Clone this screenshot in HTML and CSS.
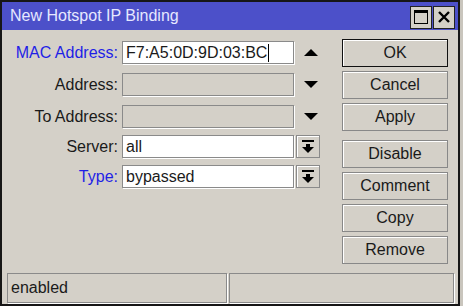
FILE: index.html
```html
<!DOCTYPE html>
<html lang="en">
<head>
  <meta charset="UTF-8">
  <title>New Hotspot IP Binding</title>
  <link rel="stylesheet" href="styles.css">
</head>
<body>
  <div class="window">
    <div class="titlebar">
      <div class="title">New Hotspot IP Binding</div>
      <div class="title-buttons">
        <div class="tbtn">
          <svg width="18" height="18" viewBox="0 0 18 18">
            <rect x="2.5" y="2.5" width="13" height="13" fill="none" stroke="#000" stroke-width="1"/>
            <rect x="2" y="2" width="14" height="3" fill="#000"/>
          </svg>
        </div>
        <div class="tbtn">
          <svg width="18" height="18" viewBox="0 0 18 18">
            <path d="M4 4 L14 14 M14 4 L4 14" stroke="#000" stroke-width="2.4"/>
          </svg>
        </div>
      </div>
    </div>

    <div class="content">
      <div class="form">
        <div class="row">
          <div class="label blue">MAC Address:</div>
          <div class="field">F7:A5:0D:9D:03:BC<span class="caret"></span></div>
          <div class="arrow">
            <svg width="14" height="8" viewBox="0 0 14 8"><path d="M0 7 L7 0 L14 7 Z" fill="#000"/></svg>
          </div>
        </div>
        <div class="row">
          <div class="label">Address:</div>
          <div class="field disabled"></div>
          <div class="arrow">
            <svg width="14" height="8" viewBox="0 0 14 8"><path d="M0 0 L14 0 L7 7 Z" fill="#000"/></svg>
          </div>
        </div>
        <div class="row tight">
          <div class="label">To Address:</div>
          <div class="field disabled"></div>
          <div class="arrow">
            <svg width="14" height="8" viewBox="0 0 14 8"><path d="M0 0 L14 0 L7 7 Z" fill="#000"/></svg>
          </div>
        </div>
        <div class="row tight">
          <div class="label">Server:</div>
          <div class="field">all</div>
          <div class="drop">
            <svg width="12" height="13" viewBox="0 0 12 13"><rect x="0" y="0" width="12" height="2" fill="#000"/><rect x="4" y="4" width="4" height="4" fill="#000"/><path d="M0 7 L12 7 L6 13 Z" fill="#000"/></svg>
          </div>
        </div>
        <div class="row tight">
          <div class="label blue">Type:</div>
          <div class="field">bypassed</div>
          <div class="drop">
            <svg width="12" height="13" viewBox="0 0 12 13"><rect x="0" y="0" width="12" height="2" fill="#000"/><rect x="4" y="4" width="4" height="4" fill="#000"/><path d="M0 7 L12 7 L6 13 Z" fill="#000"/></svg>
          </div>
        </div>
      </div>

      <div class="buttons">
        <button class="btn default">OK</button>
        <button class="btn">Cancel</button>
        <button class="btn">Apply</button>
        <button class="btn group">Disable</button>
        <button class="btn">Comment</button>
        <button class="btn">Copy</button>
        <button class="btn">Remove</button>
      </div>
    </div>

    <div class="statusbar">
      <div class="panel wide">enabled</div>
      <div class="panel"></div>
    </div>
  </div>
</body>
</html>
```

FILE: styles.css
```css
body {
  margin: 0;
  background: #c9c5bd;
  font-family: "Liberation Sans", Arial, sans-serif;
  font-size: 16px;
  color: #1a1a1a;
}

.window {
  width: 460px;
  height: 306px;
  box-sizing: border-box;
  border: 2px solid #161616;
  background: #d4d0c8;
  display: flex;
  flex-direction: column;
}

.titlebar {
  height: 28px;
  background: #4c50c9;
  display: flex;
  align-items: center;
  justify-content: space-between;
  padding: 0 3px 0 8px;
}

.title {
  color: #e6e8ff;
  font-size: 16px;
}

.title-buttons {
  display: flex;
  gap: 1px;
  margin-top: 2px;
}

.tbtn {
  width: 20px;
  height: 21px;
  background: #d4d0c8;
  border: 1px solid #222;
  display: flex;
  align-items: center;
  justify-content: center;
}

.content {
  flex: 1;
  display: flex;
  padding: 9px 0 0 0;
}

.form {
  width: 338px;
  padding-top: 2px;
}

.row {
  display: flex;
  align-items: center;
  height: 23px;
  margin-bottom: 9px;
}

.row.tight {
  margin-bottom: 7px;
}

.label {
  width: 116px;
  text-align: right;
  margin-right: 4px;
}

.blue {
  color: #1f1fe6;
}

.field {
  box-sizing: border-box;
  width: 172px;
  height: 23px;
  border: 1px solid #8a8a8a;
  box-shadow: 1px 1px 0 #fff;
  background: #fff;
  padding-left: 3px;
  line-height: 21px;
  display: flex;
  align-items: center;
}

.field.disabled {
  background: #d4d0c8;
}

.caret {
  display: inline-block;
  width: 1px;
  height: 18px;
  background: #000;
  margin-left: 1px;
}

.arrow {
  width: 24px;
  margin-left: 5px;
  display: flex;
  justify-content: center;
}

.drop {
  width: 24px;
  height: 23px;
  margin-left: 2px;
  box-sizing: border-box;
  border: 1px solid #8a8a8a;
  box-shadow: inset 1px 1px 0 #fff;
  display: flex;
  align-items: center;
  justify-content: center;
}

.buttons {
  display: flex;
  flex-direction: column;
  gap: 4px;
  padding-left: 2px;
}

.btn {
  width: 106px;
  height: 28px;
  font-family: "Liberation Sans", Arial, sans-serif;
  font-size: 16px;
  color: #1a1a1a;
  background: #d4d0c8;
  border: 1px solid #888;
  box-shadow: inset 1px 1px 0 #fff;
  padding: 0;
}

.btn.default {
  border-color: #111;
}

.btn.group {
  margin-top: 5px;
}

.statusbar {
  display: flex;
  gap: 2px;
  padding: 0 4px 1px 5px;
}

.panel {
  flex: 1;
  height: 30px;
  box-sizing: border-box;
  border: 1px solid #8a8a8a;
  box-shadow: 1px 1px 0 #fff;
  padding-left: 3px;
  line-height: 28px;
}

.panel.wide {
  flex: 0 0 220px;
}
```
